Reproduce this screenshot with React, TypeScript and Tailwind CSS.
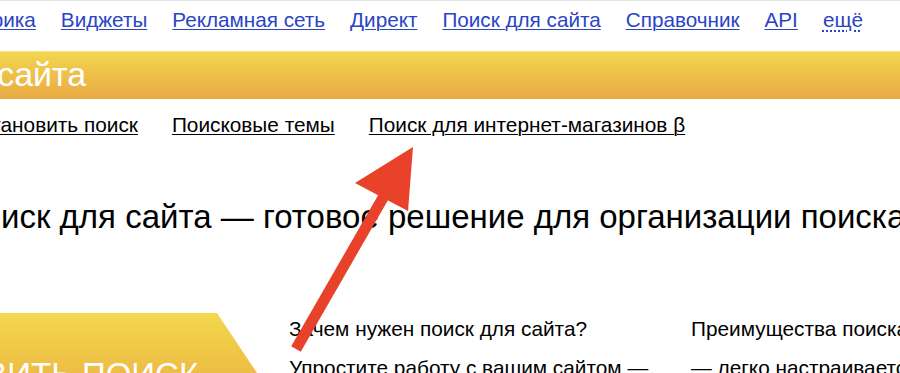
import React from 'react';

const topLinks = ['Метрика', 'Виджеты', 'Рекламная сеть', 'Директ', 'Поиск для сайта', 'Справочник', 'API'];
const subLinks = ['Установить поиск', 'Поисковые темы', 'Поиск для интернет-магазинов β'];

export default function App() {
  return (
    <div
      className="relative w-[900px] h-[373px] overflow-hidden bg-white text-black"
      style={{ fontFamily: '"Liberation Sans", Arial, sans-serif' }}
    >
      <div className="h-px bg-[#e3e3e3]" />

      {/* Top services menu */}
      <nav className="flex gap-[25px] pt-[7px] -ml-[46px] whitespace-nowrap text-[20.7px] leading-[23px]">
        {topLinks.map((item) => (
          <a key={item} href="#" className="text-[#2a44c4] underline underline-offset-[2px] decoration-1">
            {item}
          </a>
        ))}
        <a href="#" className="text-[#2a44c4] underline decoration-dotted underline-offset-[3px]">
          ещё
        </a>
      </nav>

      {/* Yellow title bar */}
      <div className="mt-[20px] h-[48px] flex items-center border-t border-[#f6e28a] bg-gradient-to-b from-[#f3d64f] to-[#e8a944]">
        <h1 className="-ml-[174px] pb-[3px] whitespace-nowrap text-[34px] text-white">Поиск для сайта</h1>
      </div>

      {/* Sub menu */}
      <nav className="mt-[14px] flex gap-[34px] -ml-[31px] whitespace-nowrap text-[20.8px] leading-[23px]">
        {subLinks.map((item) => (
          <a key={item} href="#" className="text-black underline underline-offset-[2px] decoration-1">
            {item}
          </a>
        ))}
      </nav>

      {/* Headline */}
      <h2 className="mt-[62px] -ml-[41px] whitespace-nowrap text-[33px] leading-[38px]">
        Поиск для сайта — готовое решение для организации поиска по сайту
      </h2>

      {/* Bottom: install ribbon + columns */}
      <div className="mt-[77px] flex">
        <div className="relative w-[257px] h-[60px] shrink-0 overflow-hidden bg-gradient-to-b from-[#f4d84e] to-[#edbd45] [clip-path:polygon(0_0,217px_0,100%_100%,0_100%)]">
          <div className="absolute top-[44px] -left-[149px] whitespace-nowrap text-[33px] leading-[35px] text-white uppercase">
            Установить поиск
          </div>
        </div>
        <div className="ml-[32px] flex gap-[28px] pt-[4px] text-[20.8px] leading-[23px] whitespace-nowrap">
          <div className="w-[374px]">
            <p className="mb-[16px]">Зачем нужен поиск для сайта?</p>
            <p>Упростите работу с вашим сайтом —</p>
          </div>
          <div>
            <p className="mb-[16px]">Преимущества поиска для сайта</p>
            <p>— легко настраивается</p>
          </div>
        </div>
      </div>

      {/* Red annotation arrow */}
      <svg className="absolute inset-0 pointer-events-none" width="900" height="373" viewBox="0 0 900 373">
        <line x1="296" y1="349" x2="384" y2="196" stroke="#e8422a" strokeWidth="11" />
        <polygon points="413,147 355,183 408,211" fill="#e8422a" />
      </svg>
    </div>
  );
}
